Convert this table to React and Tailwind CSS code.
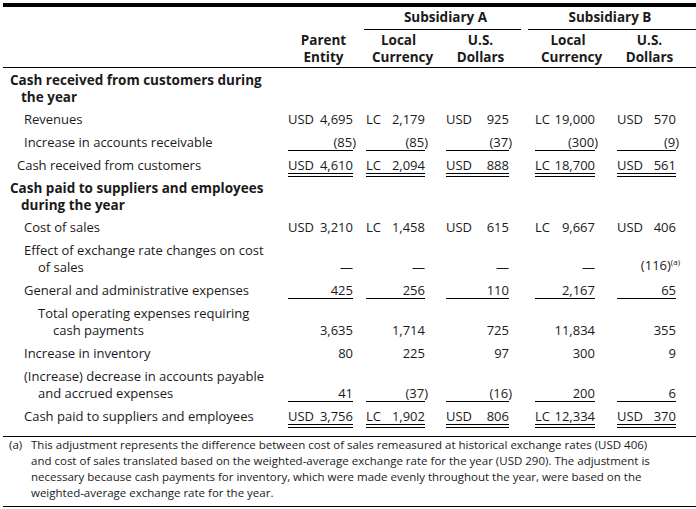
const cols = [
  'w-[65px]',
  'ml-[13px] w-[59px]',
  'ml-[21px] w-[63px]',
  'ml-[26px] w-[60px]',
  'ml-[22px] w-[59px]',
]

const rows = [
  { type: 'head', label: ['Cash received from customers during', 'the year'] },
  { label: ['Revenues'], vals: [['USD', '4,695'], ['LC', '2,179'], ['USD', '925'], ['LC', '19,000'], ['USD', '570']] },
  { label: ['Increase in accounts receivable'], vals: ['(85)', '(85)', '(37)', '(300)', '(9)'], line: 'single' },
  { label: ['Cash received from customers'], indent: 'pl-[14px]', vals: [['USD', '4,610'], ['LC', '2,094'], ['USD', '888'], ['LC', '18,700'], ['USD', '561']], line: 'double' },
  { type: 'head', label: ['Cash paid to suppliers and employees', 'during the year'] },
  { label: ['Cost of sales'], vals: [['USD', '3,210'], ['LC', '1,458'], ['USD', '615'], ['LC', '9,667'], ['USD', '406']] },
  { label: ['Effect of exchange rate changes on cost', 'of sales'], vals: ['—', '—', '—', '—', 'note'] },
  { label: ['General and administrative expenses'], vals: ['425', '256', '110', '2,167', '65'], line: 'single' },
  { label: ['Total operating expenses requiring', 'cash payments'], indent: 'pl-[50px] -indent-[15px]', vals: ['3,635', '1,714', '725', '11,834', '355'] },
  { label: ['Increase in inventory'], vals: ['80', '225', '97', '300', '9'] },
  { label: ['(Increase) decrease in accounts payable', 'and accrued expenses'], vals: ['41', '(37)', '(16)', '200', '6'], line: 'single' },
  { label: ['Cash paid to suppliers and employees'], vals: [['USD', '3,756'], ['LC', '1,902'], ['USD', '806'], ['LC', '12,334'], ['USD', '370']], line: 'double' },
]

function Value({ v }) {
  if (Array.isArray(v)) {
    return (
      <span className="flex justify-between">
        <span>{v[0]}</span>
        <span>{v[1]}</span>
      </span>
    )
  }
  if (v === 'note') {
    // footnote marker sits past the column edge
    return (
      <span className="-mr-[4px] block text-right whitespace-nowrap">
        (116)<span className="relative top-[-5px] text-[8px]">(a)</span>
      </span>
    )
  }
  if (v.startsWith('(')) {
    return (
      <span className="flex justify-end">
        {v.slice(0, -1)}
        <span className="-mr-[3px]">)</span>
      </span>
    )
  }
  return <span className="flex justify-end">{v}</span>
}

function Row({ row }) {
  if (row.type === 'head') {
    return (
      <div className="py-[3px] pl-[18px] -indent-[11px] text-[13.5px] font-bold leading-[16.5px]">
        {row.label[0]}
        <br />
        {row.label[1]}
      </div>
    )
  }
  const border =
    row.line === 'single'
      ? 'border-b border-black'
      : row.line === 'double'
        ? '-mb-[3px] border-b-4 border-double border-black'
        : 'border-b border-transparent'
  return (
    <div className="flex items-end py-[3px]">
      <div className={`w-[285px] shrink-0 leading-[17px] ${row.indent || 'pl-[35px] -indent-[14px]'}`}>
        {row.label[0]}
        {row.label[1] && (
          <>
            <br />
            {row.label[1]}
          </>
        )}
      </div>
      {row.vals.map((v, i) => (
        <div key={i} className={`${cols[i]} shrink-0 leading-[16px] ${border}`}>
          <Value v={v} />
        </div>
      ))}
    </div>
  )
}

export default function App() {
  return (
    <div className="min-h-[509px] w-[696px] bg-white pl-[3px] pt-[3px] text-[13px] text-[#1a1a1a] font-['Open_Sans',sans-serif]">
      <div className="h-[4px] bg-black" />

      <div className="border-b border-black pb-[1px] text-[13.5px] font-bold leading-[17px]">
        <div className="flex pt-[2px]">
          <div className="w-[361px] shrink-0" />
          <div className="w-[157px] shrink-0 border-b border-black pb-[3px] pl-[6px] text-center">Subsidiary A</div>
          <div className="ml-[7px] flex-1 border-b border-black pb-[3px] pr-[4px] text-center">Subsidiary B</div>
        </div>
        <div className="mt-[2px] flex">
          <div className="w-[285px] shrink-0" />
          {[
            ['Parent', 'Entity'],
            ['Local', 'Currency'],
            ['U.S.', 'Dollars'],
            ['Local', 'Currency'],
            ['U.S.', 'Dollars'],
          ].map((h, i) => (
            <div key={i} className={`${cols[i]} shrink-0 pl-[6px] text-center whitespace-nowrap`}>
              {h[0]}
              <br />
              {h[1]}
            </div>
          ))}
        </div>
      </div>

      <div className="pt-[1px]">
        {rows.map((row, i) => (
          <Row key={i} row={row} />
        ))}
      </div>

      <div className="mt-[8px] border-y border-black pb-[5px] pt-0 text-[11.5px] leading-[16px]">
        <div className="flex">
          <span className="w-[28px] shrink-0 pl-[6px]">(a)</span>
          <p>
            This adjustment represents the difference between cost of sales remeasured at historical exchange rates (USD 406)
            <br />
            and cost of sales translated based on the weighted-average exchange rate for the year (USD 290). The adjustment is
            <br />
            necessary because cash payments for inventory, which were made evenly throughout the year, were based on the
            <br />
            weighted-average exchange rate for the year.
          </p>
        </div>
      </div>
    </div>
  )
}
